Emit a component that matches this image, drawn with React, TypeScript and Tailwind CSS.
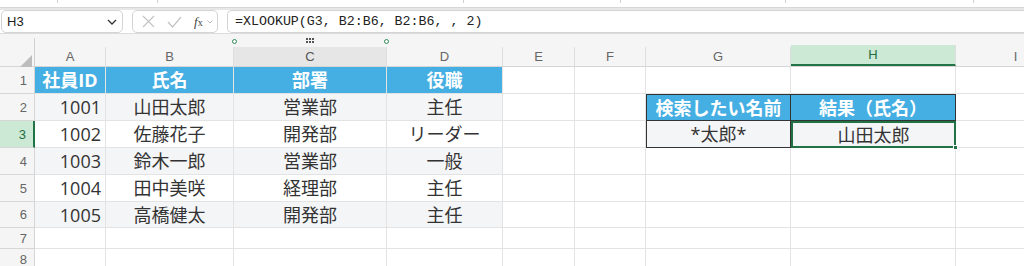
import React from 'react'

const cols = [
  { key: 'A', w: 'w-[71px]' },
  { key: 'B', w: 'w-[128px]' },
  { key: 'C', w: 'w-[153px]' },
  { key: 'D', w: 'w-[116px]' },
  { key: 'E', w: 'w-[72px]' },
  { key: 'F', w: 'w-[71px]' },
  { key: 'G', w: 'w-[145px]' },
  { key: 'H', w: 'w-[165px]' },
  { key: 'I', w: 'w-[120px]' },
]

type Row = { n: number; h: string; cells: React.ReactNode[]; band?: boolean }

const font = 'font-["Open_Sans","Noto_Sans_CJK_JP",sans-serif]'
const blue = 'bg-[#45aee2] text-white font-bold'

const staff = [
  ['1001', '山田太郎', '営業部', '主任'],
  ['1002', '佐藤花子', '開発部', 'リーダー'],
  ['1003', '鈴木一郎', '営業部', '一般'],
  ['1004', '田中美咲', '経理部', '主任'],
  ['1005', '高橋健太', '開発部', '主任'],
]

function Cell({ w, className = 'border-r-[#e3e3e3] border-b-[#e3e3e3]', children }: { w: string; className?: string; children?: React.ReactNode }) {
  return <div className={`${w} shrink-0 h-full border-r border-b flex items-center ${className}`}>{children}</div>
}

const grid = 'border-r-[#e3e3e3] border-b-[#e3e3e3]'

function FormulaBar() {
  return (
    <div className="h-[24px] flex items-stretch gap-[9px] pl-[1px] border-b border-[#dcdcdc]">
      <div className="w-[122px] border border-[#d4d4d4] rounded-[5px] flex items-center justify-between px-[5px] text-[13px] text-[#222] font-['Liberation_Sans',sans-serif]">
        <span>H3</span>
        <svg width="10" height="6" viewBox="0 0 10 6" fill="none" stroke="#333" strokeWidth="1.3">
          <path d="M1 1l4 4 4-4" />
        </svg>
      </div>
      <div className="w-[86px] border border-[#d4d4d4] rounded-[5px] flex items-center gap-[12px] pl-[9px]">
        <svg width="13" height="13" viewBox="0 0 13 13" stroke="#c4c4c4" strokeWidth="1.2">
          <path d="M1 1l11 11M12 1L1 12" />
        </svg>
        <svg width="15" height="12" viewBox="0 0 15 12" fill="none" stroke="#c4c4c4" strokeWidth="1.2">
          <path d="M1 6l4.5 5L14 1" />
        </svg>
        <span className="flex items-center gap-[4px]">
          <span className="italic text-[13px] text-[#444] font-['Liberation_Serif',serif] leading-none">
            f<span className="text-[10px] not-italic">x</span>
          </span>
          <svg width="6" height="4" viewBox="0 0 6 4" fill="none" stroke="#bbb" strokeWidth="1">
            <path d="M0.5 0.5l2.5 2.5 2.5-2.5" />
          </svg>
        </span>
      </div>
      <div className="flex-1 border border-r-0 border-[#d4d4d4] rounded-l-[5px] flex items-center pl-[7px] text-[13.3px] text-[#222] font-['Liberation_Mono',monospace]">
        =XLOOKUP(G3, B2:B6, B2:B6, , 2)
      </div>
    </div>
  )
}

function ColumnHeaders() {
  return (
    <div className="h-[33px] flex bg-[#f5f5f5] border-b border-[#d6d6d6]">
      <div className="w-[35px] shrink-0 relative border-r border-[#d0d0d0] mt-[4px]">
        <svg className="absolute left-[20px] top-[17px]" width="12" height="12" viewBox="0 0 12 12">
          <path d="M12 0V12H0Z" fill="#bdbdbd" />
        </svg>
      </div>
      {cols.map((c) => (
        <div key={c.key} className={`${c.w} shrink-0 flex flex-col relative`}>
          <div className="h-[15px]" />
          <div
            className={`flex-1 flex items-center justify-center text-[13px] font-['Liberation_Sans',sans-serif] border-r border-[#dedede] ${
              c.key === 'C' ? 'bg-[#e6e6e6] text-[#555]' : c.key === 'H' ? 'bg-[#cce9d6] text-[#1d6e3e] border-b-2 border-b-[#217346]' : 'text-[#666]'
            }`}
          >
            {c.key}
          </div>
          {c.key === 'C' ? (
            <>
              <span className="absolute left-[-2px] top-[5px] w-[5px] h-[5px] rounded-full border border-[#2e8b57] bg-white" />
              <span className="absolute right-[-2px] top-[5px] w-[5px] h-[5px] rounded-full border border-[#2e8b57] bg-white" />
              <span className="absolute left-[72px] top-[4px] grid grid-cols-3 gap-[1px]">
                {Array.from({ length: 6 }).map((_, i) => (
                  <span key={i} className="w-[2px] h-[2px] bg-[#555]" />
                ))}
              </span>
            </>
          ) : null}
        </div>
      ))}
    </div>
  )
}

export default function App() {
  const rows: Row[] = [
    {
      n: 1,
      h: 'h-[27px]',
      cells: [
        <Cell key="a" w="w-[71px]" className={`${blue} ${grid} justify-center`}>社員ID</Cell>,
        <Cell key="b" w="w-[128px]" className={`${blue} ${grid} justify-center`}>氏名</Cell>,
        <Cell key="c" w="w-[153px]" className={`${blue} ${grid} justify-center`}>部署</Cell>,
        <Cell key="d" w="w-[116px]" className={`${blue} ${grid} justify-center`}>役職</Cell>,
      ],
    },
    ...staff.map((s, i) => ({
      n: i + 2,
      h: i === 4 ? 'h-[26px]' : 'h-[27px]',
      band: i % 2 === 0,
      cells: [
        <Cell key="a" w="w-[71px]" className={`${grid} justify-end pr-[4px]`}>{s[0]}</Cell>,
        <Cell key="b" w="w-[128px]" className={`${grid} justify-center`}>{s[1]}</Cell>,
        <Cell key="c" w="w-[153px]" className={`${grid} justify-center`}>{s[2]}</Cell>,
        <Cell key="d" w="w-[116px]" className={`${grid} justify-center`}>{s[3]}</Cell>,
      ],
    })),
    { n: 7, h: 'h-[21px]', cells: [] },
    { n: 8, h: 'h-[21px]', cells: [] },
  ]

  const extra = (n: number) => {
    if (n === 2)
      return [
        <Cell key="g" w="w-[145px]" className={`${blue} justify-center border-t border-l border-t-[#333] border-l-[#333] border-r-[#333] border-b-[#333]`}>
          検索したい名前
        </Cell>,
        <Cell key="h" w="w-[165px]" className={`${blue} justify-center border-t border-t-[#333] border-r-[#333] border-b-[#333]`}>
          結果（氏名）
        </Cell>,
      ]
    if (n === 3)
      return [
        <Cell key="g" w="w-[145px]" className="justify-center bg-[#f4f5f7] border-l border-l-[#333] border-r-[#333] border-b-[#333]">
          *太郎*
        </Cell>,
        <div key="h" className="w-[165px] shrink-0 h-full relative flex items-center justify-center bg-[#f4f5f7] border-2 border-[#217346]">
          山田太郎
          <span className="absolute right-[-4px] bottom-[-4px] w-[5px] h-[5px] bg-[#217346] border border-white" />
        </div>,
      ]
    return null
  }

  return (
    <div className={`w-[1024px] h-[266px] overflow-hidden bg-white ${font}`}>
      <div className="h-[7px] relative bg-white">
        {[57, 157, 463, 620, 785, 973].map((x) => (
          <span key={x} className="absolute top-0 h-[3px] w-px bg-[#cfcfcf]" style={{ left: x }} />
        ))}
      </div>
      <div className="h-[3px] bg-[#e7e7e7] border-t border-[#d6d6d6]" />
      <FormulaBar />
      <ColumnHeaders />
      {rows.map((r) => {
        const ex = extra(r.n)
        return (
          <div key={r.n} className={`${r.h} flex text-[18px] text-[#333] leading-none`}>
            <div
              className={`w-[35px] shrink-0 flex items-center justify-end pr-[7px] text-[13px] font-['Liberation_Sans',sans-serif] border-b ${
                r.n === 3 ? 'bg-[#cce9d6] text-[#1d6e3e] border-r-2 border-r-[#217346] border-b-[#d6d6d6] pr-[6px]' : 'bg-[#f5f5f5] text-[#666] border-r border-[#d6d6d6]'
              }`}
            >
              {r.n}
            </div>
            {cols.map((c, ci) => {
              if (ci < 4 && r.cells[ci]) {
                const el = r.cells[ci] as React.ReactElement<{ className?: string }>
                return r.band ? React.cloneElement(el, { className: `${el.props.className ?? ''} bg-[#f4f5f7]` }) : el
              }
              if (ex && (c.key === 'G' || c.key === 'H')) return ex[c.key === 'G' ? 0 : 1]
              return <Cell key={c.key} w={c.w} />
            })}
          </div>
        )
      })}
    </div>
  )
}
